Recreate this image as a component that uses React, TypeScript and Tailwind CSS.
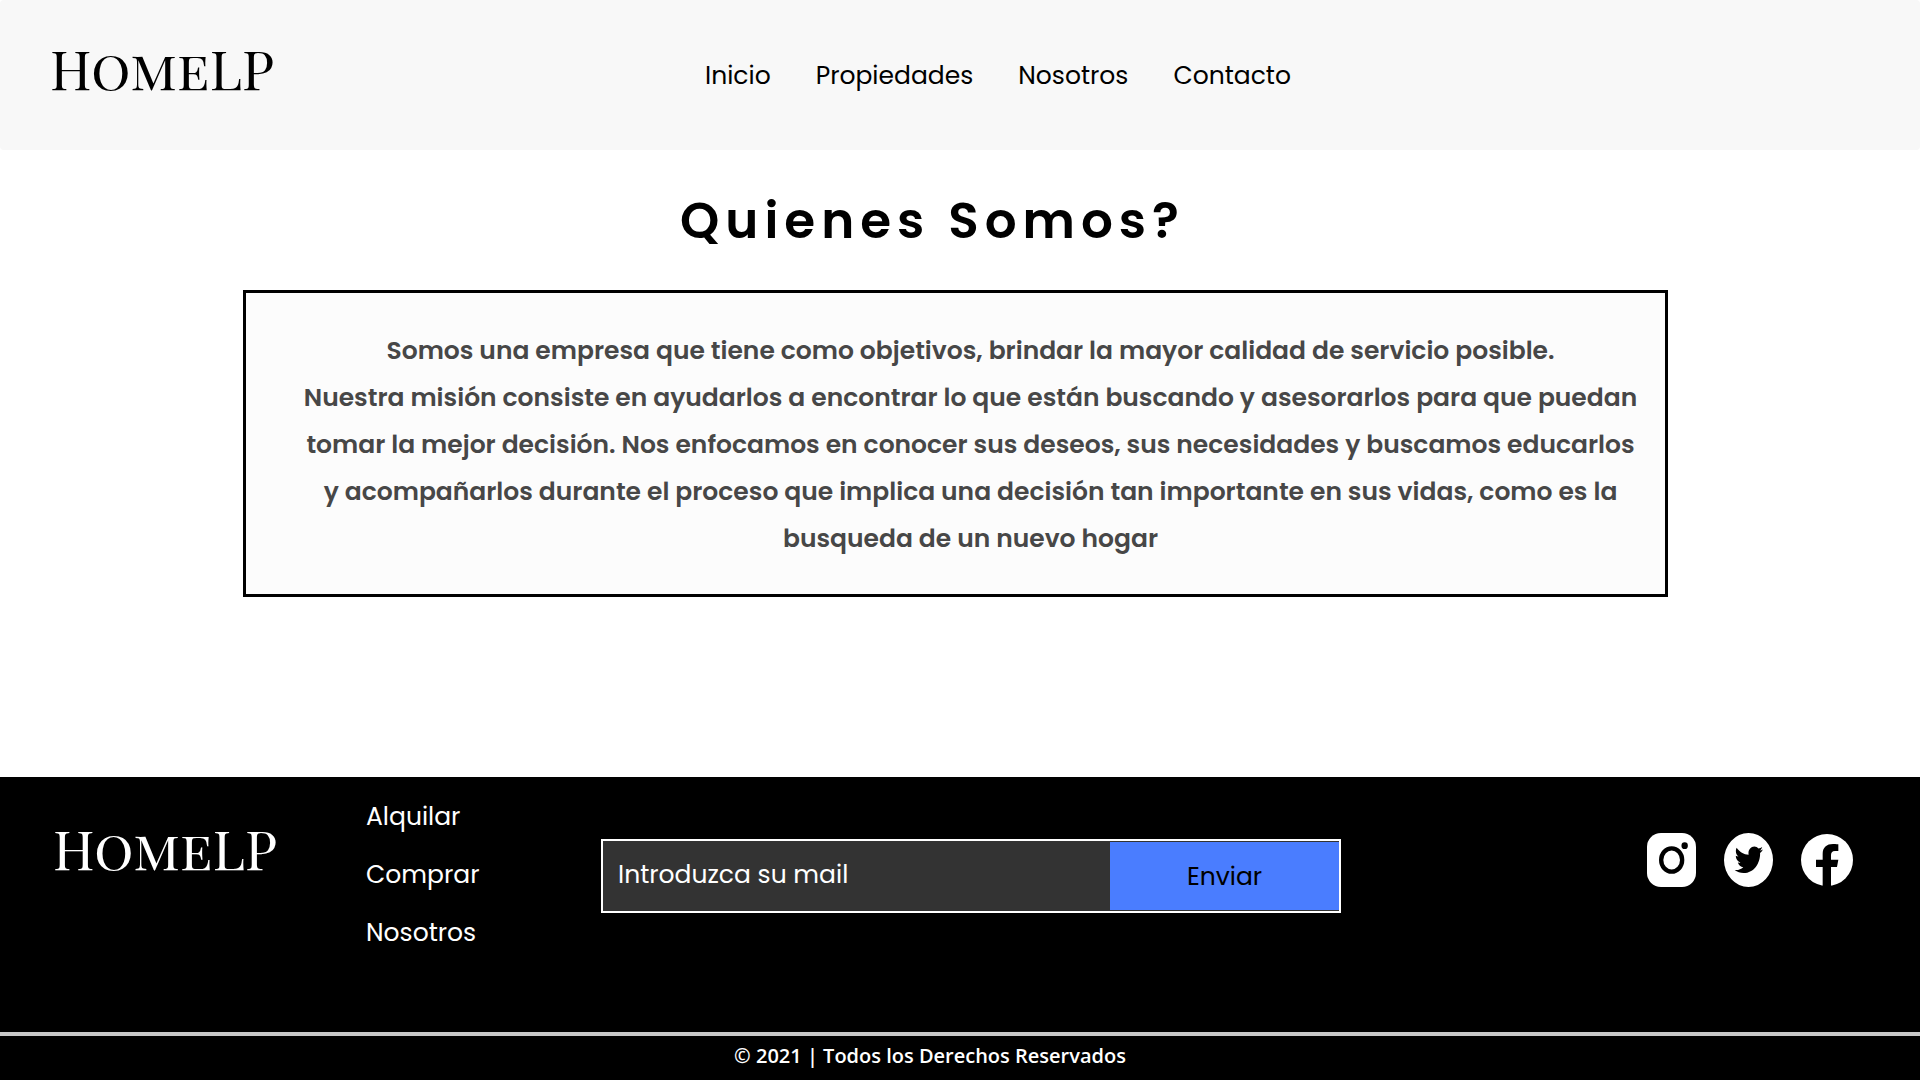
import type { ReactNode } from "react";

const navLinks = ["Inicio", "Propiedades", "Nosotros", "Contacto"];
const footerLinks = ["Alquilar", "Comprar", "Nosotros"];

function Logo() {
  return (
    <a href="#" className="block font-['Playfair_Display_SC','Liberation_Serif',serif] text-[55px] leading-[60px] whitespace-nowrap">
      HomeLP
    </a>
  );
}

function SocialLink({ label, children }: { label: string; children: ReactNode }) {
  return (
    <a href="#" aria-label={label} className="block">
      {children}
    </a>
  );
}

function Instagram() {
  return (
    <svg width="49" height="54" viewBox="0 0 147 162">
      <rect width="147" height="162" rx="42" ry="42" fill="#fff" />
      <ellipse cx="74" cy="81" rx="31.5" ry="35" fill="none" stroke="#000" strokeWidth="13" />
      <ellipse cx="113" cy="38" rx="9.5" ry="10" fill="#000" />
    </svg>
  );
}

function Twitter() {
  return (
    <svg width="49" height="54" viewBox="0 0 147 162">
      <ellipse cx="73.5" cy="81" rx="73.5" ry="81" fill="#fff" />
      <g transform="translate(32 31) scale(.166 .192)">
        <path d="M459.37 151.716c.325 4.548.325 9.097.325 13.645 0 138.72-105.583 298.558-298.558 298.558-59.452 0-114.68-17.219-161.137-47.106 8.447.974 16.568 1.299 25.34 1.299 49.055 0 94.213-16.568 130.274-44.832-46.132-.975-84.792-31.188-98.112-72.772 6.498.974 12.995 1.624 19.818 1.624 9.421 0 18.843-1.3 27.614-3.573-48.081-9.747-84.143-51.98-84.143-102.985v-1.299c13.969 7.797 30.214 12.67 47.431 13.319-28.264-18.843-46.781-51.005-46.781-87.391 0-19.492 5.197-37.36 14.294-52.954 51.655 63.675 129.3 105.258 216.365 109.807-1.624-7.797-2.599-15.918-2.599-24.04 0-57.828 46.782-104.934 104.934-104.934 30.213 0 57.502 12.67 76.67 33.137 23.715-4.548 46.456-13.32 66.599-25.34-7.798 24.366-24.366 44.833-46.132 57.827 21.117-2.273 41.584-8.122 60.426-16.243-14.292 20.791-32.161 39.308-52.628 54.253z" />
      </g>
    </svg>
  );
}

function Facebook() {
  return (
    <svg width="52" height="52" viewBox="0 0 156 156">
      <circle cx="78" cy="78" r="78" fill="#fff" />
      <path d="M65 158V99H45V77H65V60C65 40 77 30 96 30C105 30 112 31 112 31V51H102C93 51 90 57 90 63V77H112L108 99H90V158Z" fill="#000" />
    </svg>
  );
}

export default function App() {
  return (
    <div className="flex min-h-screen flex-col bg-white font-['Poppins','Inter',sans-serif] text-[25px] leading-[40px] text-black">
      <header className="grid grid-cols-[1fr_auto_1fr] items-start rounded-[4px] bg-[#f8f8f8] pt-[37px] pb-[53px] pl-[50px]">
        <Logo />
        <nav className="flex gap-[45px] pt-[19px] pl-[26px]">
          {navLinks.map((link) => (
            <a key={link} href="#">
              {link}
            </a>
          ))}
        </nav>
      </header>

      <main className="flex-1 pr-[252px] pl-[243px]">
        <h1 className="pt-[35px] pr-[46px] text-center text-[50px] leading-[72px] font-semibold tracking-[6px]">
          Quienes Somos?
        </h1>
        <section className="mt-[33px] border-3 border-black bg-[#fcfcfc] pt-[34px] pr-[25px] pb-[32px] pl-[55px] text-center text-[25px] leading-[47px] font-semibold text-[#474747]">
          <p>Somos una empresa que tiene como objetivos, brindar la mayor calidad de servicio posible.</p>
          <p>
            Nuestra misión consiste en ayudarlos a encontrar lo que están buscando y asesorarlos para que puedan
            tomar la mejor decisión. Nos enfocamos en conocer sus deseos, sus necesidades y buscamos educarlos
            y acompañarlos durante el proceso que implica una decisión tan importante en sus vidas, como es la
            busqueda de un nuevo hogar
          </p>
        </section>
      </main>

      <footer className="bg-black text-white">
        <div className="flex items-start pt-[20px] pr-[67px] pb-[79px] pl-[53px]">
          <div className="w-[313px] pt-[20px]">
            <Logo />
          </div>
          <ul className="flex w-[235px] flex-col gap-[18px]">
            {footerLinks.map((link) => (
              <li key={link}>
                <a href="#">{link}</a>
              </li>
            ))}
          </ul>
          <form className="mt-[42px] flex h-[74px] w-[740px] border-2 border-white bg-[#333]">
            <input
              type="email"
              aria-label="Introduzca su mail"
              placeholder="Introduzca su mail"
              className="min-w-0 flex-1 px-[15px] pb-[3px] outline-none placeholder:text-white placeholder:opacity-100"
            />
            <button type="button" className="my-px w-[229px] bg-[#4a7dff] pt-[2px] text-black">
              Enviar
            </button>
          </form>
          <div className="ml-auto flex items-center gap-[28px] pt-[36px]">
            <SocialLink label="Instagram">
              <Instagram />
            </SocialLink>
            <SocialLink label="Twitter">
              <Twitter />
            </SocialLink>
            <SocialLink label="Facebook">
              <Facebook />
            </SocialLink>
          </div>
        </div>
        <p className="border-t-4 border-[#c8c8c8] pr-[60px] pb-[4px] text-center font-['Open_Sans',sans-serif] text-[20px] leading-[40px] font-semibold">
          © 2021 | Todos los Derechos Reservados
        </p>
      </footer>
    </div>
  );
}
